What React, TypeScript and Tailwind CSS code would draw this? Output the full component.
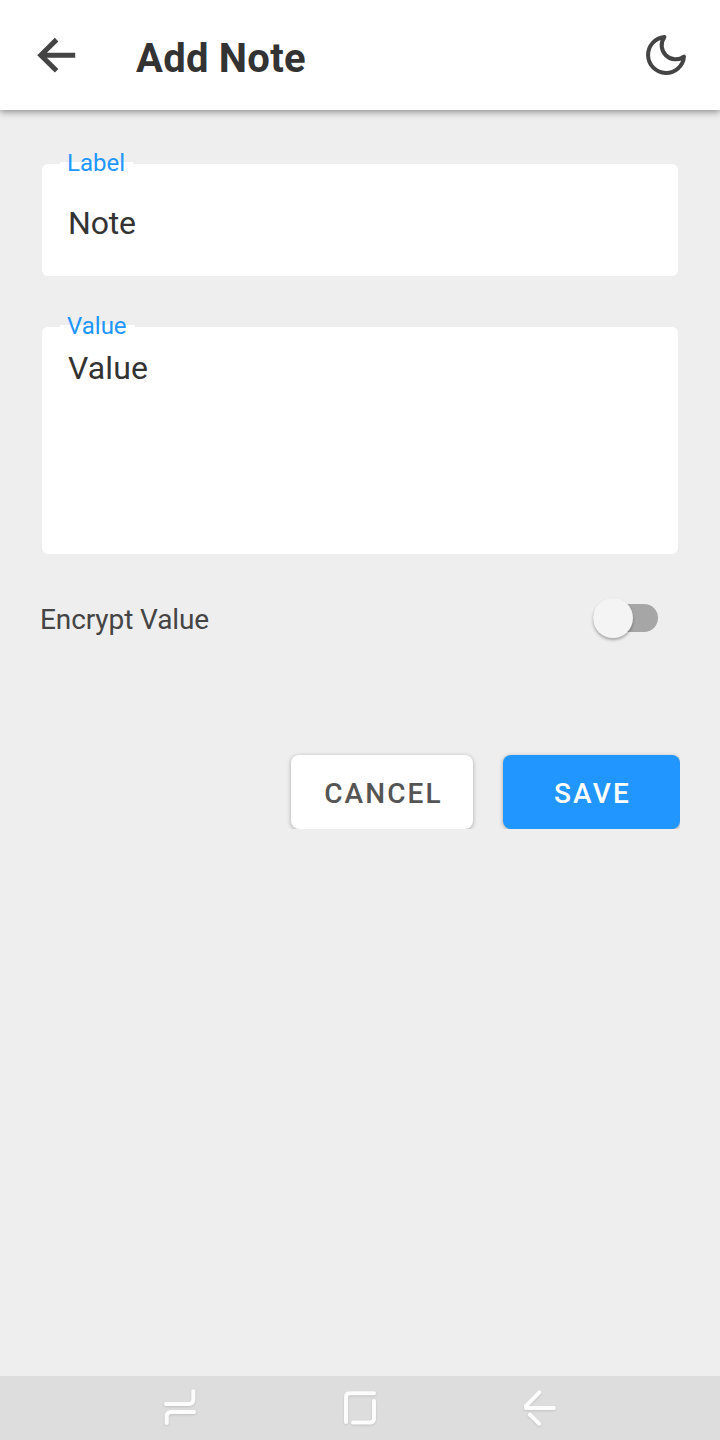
import React from 'react';

function Header() {
  return (
    <header className="relative flex h-[110px] shrink-0 items-start bg-white pl-9 pr-[30px] shadow-[0_2px_7px_rgba(0,0,0,0.42)]">
      <button aria-label="Back" className="mt-[35px] h-10 w-10">
        <svg width="40" height="40" viewBox="0 0 40 40" fill="none" stroke="#444" strokeWidth="5">
          <path d="M39.200 20.200H5M20.600 4.600L4.800 20.200L20.600 35.800" />
        </svg>
      </button>
      <h1 className="ml-[60px] mt-[35px] flex-1 text-[40px] font-bold leading-[48px] tracking-[0.25px] text-[#333]">Add Note</h1>
      <button aria-label="Dark mode" className="mt-[31px] h-12 w-12">
        <svg width="48" height="48" viewBox="0 0 24 24" fill="none" stroke="#444" strokeWidth="2" strokeLinecap="round" strokeLinejoin="round">
          <path d="M21 12.79A9 9 0 1 1 11.21 3 7 7 0 0 0 21 12.79z" />
        </svg>
      </button>
    </header>
  );
}

function FieldLabel({ children }: { children: React.ReactNode }) {
  return (
    <span className="absolute left-[18px] top-[-16px] block pl-[7px] pr-[8px] text-[24px] leading-[31px] text-[#2196ff]">
      <span className="absolute inset-x-0 top-[14px] h-3 bg-white" />
      <span className="relative">{children}</span>
    </span>
  );
}

function Switch() {
  return (
    <div className="flex w-[65px] items-center">
      <span className="relative h-10 w-10 shrink-0 rounded-full bg-[#f4f4f4] shadow-[0_2px_3px_rgba(0,0,0,0.3)]" />
      <span className="-ml-10 h-7 flex-1 rounded-full bg-[#a6a6a6]" />
    </div>
  );
}

function NavigationBar() {
  return (
    <nav className="flex h-16 shrink-0 items-center justify-center gap-[140px] bg-[#ddd]">
      <svg className="drop-shadow-[0_1px_1px_rgba(0,0,0,0.12)]" width="40" height="40" viewBox="0 0 40 40" fill="none" stroke="#fcfcfc" strokeWidth="4" strokeLinecap="round">
        <path d="M6 16H29Q33.300 16 33.300 11.500V3.200M34 24H11.500Q6.700 24 6.700 28.500V35" />
      </svg>
      <svg className="drop-shadow-[0_1px_1px_rgba(0,0,0,0.12)]" width="40" height="40" viewBox="0 0 40 40" fill="none" stroke="#fcfcfc" strokeWidth="4" strokeLinecap="round">
        <path d="M6 34V9Q6 5.200 10 5.200H34M34 13V30.500Q34 34.500 30 34.500H13" />
      </svg>
      <svg className="drop-shadow-[0_1px_1px_rgba(0,0,0,0.12)]" width="40" height="40" viewBox="0 0 40 40" fill="none" stroke="#fcfcfc" strokeWidth="4" strokeLinecap="round" strokeLinejoin="round">
        <path d="M34 20H6V18L19.300 4.300M10 26.700L19.200 35.700" />
      </svg>
    </nav>
  );
}

export default function App() {
  return (
    <div className="flex h-[1440px] w-[720px] flex-col bg-[#eee] font-[Roboto,sans-serif] text-[#333]">
      <Header />
      <main className="flex flex-1 flex-col px-10 pt-[54px]">
        <div className="relative mx-0.5 flex h-28 items-center rounded-[6px] bg-white px-[26px] pt-[6px]">
          <FieldLabel>Label</FieldLabel>
          <span className="text-[32px] leading-10 tracking-[-0.2px]">Note</span>
        </div>
        <div className="relative mx-0.5 mt-[51px] h-[227px] rounded-[6px] bg-white px-[26px] pt-[21px]">
          <FieldLabel>Value</FieldLabel>
          <span className="block text-[32px] leading-10 tracking-[0.1px]">Value</span>
        </div>
        <div className="mt-11 flex h-10 items-center justify-between pr-[22px]">
          <span className="pt-[3px] text-[28px] leading-9 tracking-[-0.1px] text-[#444]">Encrypt Value</span>
          <Switch />
        </div>
        <div className="-ml-2 mt-[109px] flex h-[82px] justify-end gap-[30px] overflow-hidden pl-2 pt-2">
          <button className="h-[74px] w-[182px] rounded-[8px] bg-white pl-[3px] pt-[3px] text-[28px] font-medium tracking-[2.1px] text-[#555] shadow-[0_1px_4px_rgba(0,0,0,0.3)]">CANCEL</button>
          <button className="h-[74px] w-[177px] rounded-[8px] bg-[#2196ff] pl-[2px] pt-[3px] text-[28px] font-medium tracking-[2.2px] text-white shadow-[0_1px_4px_rgba(0,0,0,0.3)]">SAVE</button>
        </div>
      </main>
      <NavigationBar />
    </div>
  );
}
